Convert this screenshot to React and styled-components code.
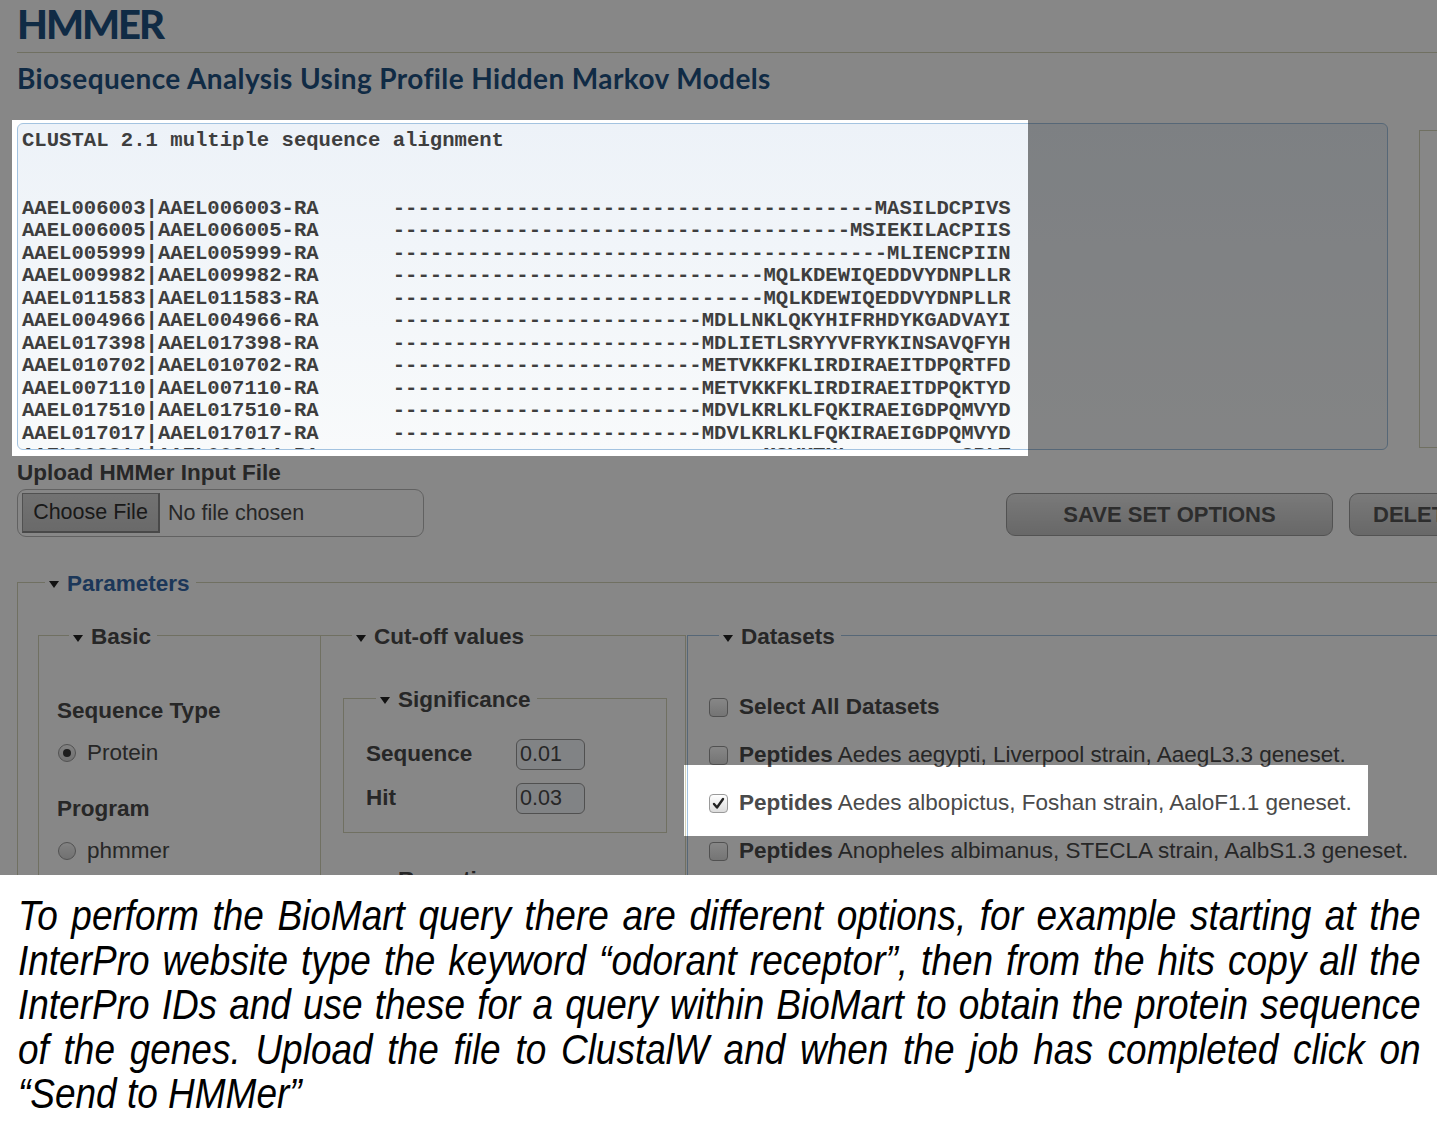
import React from 'react';
import styled, { createGlobalStyle } from 'styled-components';

const GlobalStyle = createGlobalStyle`
    html, body {
        margin: 0;
        padding: 0;
        background: #fff;
    }
    body {
        font-family: 'Liberation Sans', Arial, sans-serif;
    }
`;

const OLIVE = '#d3d3ba';
const SKY = '#a3c3e0';
const INK = '#4a4a4a';

const Page = styled.div`
    width: 100%;
    min-height: 1125px;
    background: #fff;
    overflow: hidden;
`;

const Screen = styled.div`
    position: relative;
    height: 875px;
    overflow: hidden;
    background: #fff;
    padding-left: 17px;
    box-sizing: border-box;
    color: ${INK};
`;

const Title = styled.h1`
    margin: 0;
    height: 52px;
    font-family: 'Lato', 'Liberation Sans', sans-serif;
    font-weight: 900;
    font-size: 40px;
    line-height: 48px;
    letter-spacing: -2px;
    color: #1f5282;
    border-bottom: 1px solid ${OLIVE};
`;

const Subtitle = styled.h2`
    margin: 9px 0 0;
    font-family: 'Lato', 'Liberation Sans', sans-serif;
    font-weight: 700;
    font-size: 28px;
    line-height: 32px;
    letter-spacing: 0.4px;
    color: #1f5282;
`;

const EditorRow = styled.div`
    display: flex;
    gap: 31px;
    margin-top: 29px;
    height: 327px;
`;

const CodeArea = styled.div`
    flex: 0 0 1371px;
    box-sizing: border-box;
    height: 327px;
    border: 1px solid ${SKY};
    border-radius: 6px;
    background: linear-gradient(#edf2f8, #f8fafb);
    overflow: hidden;
    padding: 6px 4px;
`;

const Code = styled.pre`
    margin: 0;
    font-family: 'Liberation Mono', 'Courier New', monospace;
    font-weight: 700;
    font-size: 20.6px;
    line-height: 22.5px;
    color: #3e3e3e;
`;

const SidePanel = styled.div`
    flex: 0 0 300px;
    margin-top: 7px;
    height: 316px;
    border: 1px solid ${OLIVE};
`;

const FieldLabel = styled.div`
    margin-top: 10px;
    font-size: 22.5px;
    line-height: 26px;
    font-weight: 700;
`;

const ActionRow = styled.div`
    display: flex;
    align-items: flex-start;
    margin-top: 3px;
`;

const FileBox = styled.div`
    flex: 0 0 407px;
    display: flex;
    align-items: center;
    gap: 8px;
    height: 48px;
    box-sizing: border-box;
    padding: 0 4px;
    border: 1px solid #b8b8b8;
    border-radius: 9px;
    font-size: 21.5px;
    white-space: nowrap;
`;

const FileButton = styled.span`
    display: flex;
    align-items: center;
    justify-content: center;
    width: 138px;
    height: 40px;
    box-sizing: border-box;
    background: linear-gradient(#d8d8d8, #c8c8c8);
    border: 1px solid #9a9a9a;
    border-right: 2px solid #8a8a8a;
    border-bottom: 2px solid #8a8a8a;
    color: #303030;
`;

const Buttons = styled.div`
    flex: 0 0 auto;
    display: flex;
    gap: 16px;
    margin: 4px 0 0 582px;
`;

const BigButton = styled.button`
    flex: 0 0 327px;
    height: 43px;
    border: 1px solid #9c9c9c;
    border-radius: 9px;
    background: linear-gradient(#e6e6e6, #c4c4c4);
    font-family: 'Liberation Sans', Arial, sans-serif;
    font-weight: 700;
    font-size: 22px;
    color: #555;
    white-space: nowrap;
    text-align: ${p => (p.$cut ? 'left' : 'center')};
    padding: ${p => (p.$cut ? '0 0 0 23px' : '0')};
`;

const Fieldset = styled.fieldset`
    margin: 0;
    padding: 0;
    min-width: 0;
    border: none;
    ${p => p.$top && `border-top: 1px solid ${p.$top};`}
    ${p => p.$left && `border-left: 1px solid ${p.$left};`}
    ${p => p.$right && `border-right: 1px solid ${p.$right};`}
    ${p => p.$bottom && `border-bottom: 1px solid ${p.$bottom};`}
`;

const ParamsSet = styled(Fieldset)`
    margin-top: 31px;
    width: 1500px;
    height: 400px;
`;

const Legend = styled.legend`
    margin-left: ${p => p.$offset}px;
    padding: 0 6px 0 4px;
    font-size: 22.5px;
    line-height: 26px;
    font-weight: 700;
    white-space: nowrap;
    color: ${p => p.$color || INK};
`;

const LegendInner = styled.span`
    display: inline-flex;
    align-items: center;
    gap: 8px;
`;

const Caret = styled.span`
    width: 0;
    height: 0;
    border-left: 5px solid transparent;
    border-right: 5px solid transparent;
    border-top: 7px solid #222;
    margin-top: 2px;
`;

const Columns = styled.div`
    display: grid;
    grid-template-columns: 283px 365px 1fr;
    margin: 25px 0 0 20px;
`;

const BasicSet = styled(Fieldset)`
    height: 400px;
    padding: 0 0 0 18px;
`;

const CutSet = styled(Fieldset)`
    height: 400px;
    padding: 0 0 0 22px;
`;

const DataSet = styled(Fieldset)`
    height: 400px;
    margin-left: 1px;
    padding: 0 0 0 21px;
`;

const Heading = styled.div`
    margin-top: ${p => p.$gap}px;
    font-size: 22.5px;
    line-height: 26px;
    font-weight: 700;
    white-space: nowrap;
`;

const OptionRow = styled.label`
    display: flex;
    align-items: center;
    gap: ${p => p.$gap || 11}px;
    margin-top: ${p => p.$mt}px;
    height: 26px;
    font-size: 22.5px;
    line-height: 26px;
    white-space: nowrap;
    color: ${INK};
    b {
        font-weight: 700;
    }
`;

const Radio = styled.span`
    position: relative;
    width: 18px;
    height: 18px;
    box-sizing: border-box;
    border-radius: 50%;
    border: 1px solid #9a9a9a;
    background: linear-gradient(#f6f6f6, #d6d6d6);
    margin-left: 1px;

    &::after {
        content: '';
        display: ${p => (p.$on ? 'block' : 'none')};
        position: absolute;
        left: 4px;
        top: 4px;
        width: 8px;
        height: 8px;
        border-radius: 50%;
        background: #3a3a3a;
    }
`;

const Box = styled.span`
    display: flex;
    align-items: center;
    justify-content: center;
    width: 19px;
    height: 19px;
    box-sizing: border-box;
    border-radius: 4px;
    border: 1px solid #9a9a9a;
    background: linear-gradient(#ffffff, #dcdcdc);
`;

const SigSet = styled(Fieldset)`
    margin: 34px 0 0 0;
    width: 324px;
    box-sizing: border-box;
    border: 1px solid ${OLIVE};
    padding: 0 0 18px 22px;
`;

const NextSet = styled(Fieldset)`
    margin-top: 32px;
    width: 324px;
    height: 120px;
    border: 1px solid ${OLIVE};
`;

const ValueRow = styled.div`
    display: grid;
    grid-template-columns: 150px 69px;
    align-items: center;
    margin-top: ${p => p.$mt}px;
    font-size: 22.5px;
    font-weight: 700;
`;

const ValueInput = styled.span`
    height: 31px;
    box-sizing: border-box;
    border: 1px solid #979797;
    border-radius: 6px;
    background: #f4f7fb;
    padding-left: 3px;
    font-size: 21.5px;
    line-height: 29px;
    font-weight: 400;
`;

const Overlay = styled.div`
    position: absolute;
    inset: 0;
    background: rgba(0, 0, 0, 0.47);
    clip-path: path(evenodd, 'M0 0H1437V875H0Z M12 120H1028V456H12Z M684 765H1368V836H684Z');
    pointer-events: none;
`;

const CaptionFrame = styled.div`
    height: 250px;
    overflow: hidden;
    padding: 18px 0 0 18px;
    box-sizing: border-box;
`;

/* the slide used a narrow italic face; squeeze the regular one to the same widths */
const Caption = styled.div`
    width: 1631px;
    transform: scaleX(0.86);
    transform-origin: left top;
    font-family: 'Liberation Sans', Arial, sans-serif;
    font-style: italic;
    font-size: 43px;
    line-height: 44.5px;
    color: #000;
`;

const CaptionLine = styled.span`
    display: block;
    white-space: nowrap;
    text-align: justify;
    text-align-last: ${p => (p.$last ? 'left' : 'justify')};
`;

const ROWS = [
    ['006003', 'MASILDCPIVS'],
    ['006005', 'MSIEKILACPIIS'],
    ['005999', 'MLIENCPIIN'],
    ['009982', 'MQLKDEWIQEDDVYDNPLLR'],
    ['011583', 'MQLKDEWIQEDDVYDNPLLR'],
    ['004966', 'MDLLNKLQKYHIFRHDYKGADVAYI'],
    ['017398', 'MDLIETLSRYYVFRYKINSAVQFYH'],
    ['010702', 'METVKKFKLIRDIRAEITDPQRTFD'],
    ['007110', 'METVKKFKLIRDIRAEITDPQKTYD'],
    ['017510', 'MDVLKRLKLFQKIRAEIGDPQMVYD'],
    ['017017', 'MDVLKRLKLFQKIRAEIGDPQMVYD'],
    ['008814', 'MSYKTNL---------SRLT'],
];

const alignment =
    'CLUSTAL 2.1 multiple sequence alignment\n\n\n' +
    ROWS.map(([id, seq]) => `AAEL${id}|AAEL${id}-RA      ${seq.padStart(50, '-')}`).join('\n');

const Check = () => (
    <svg width="13" height="13" viewBox="0 0 13 13">
        <path d="M2 7 L5 10.5 L11 2" fill="none" stroke="#222" strokeWidth="2.4" strokeLinecap="round" strokeLinejoin="round" />
    </svg>
);

const SectionLegend = ({ children, color, offset }) => (
    <Legend $color={color} $offset={offset}>
        <LegendInner>
            <Caret />
            {children}
        </LegendInner>
    </Legend>
);

const DATASETS = [
    ['Aedes aegypti, Liverpool strain, AaegL3.3 geneset.', false],
    ['Aedes albopictus, Foshan strain, AaloF1.1 geneset.', true],
    ['Anopheles albimanus, STECLA strain, AalbS1.3 geneset.', false],
];

const CAPTION = [
    'To perform the BioMart query there are different options, for example  starting at the',
    'InterPro website type the  keyword “odorant receptor”, then from the hits copy all the',
    'InterPro IDs and use these for a query within BioMart to obtain the protein sequence',
    'of the genes. Upload the file to ClustalW and when the job has completed  click on',
    '“Send to HMMer”',
];

const App = () => (
    <Page>
        <GlobalStyle />
        <Screen>
            <Title>HMMER</Title>
            <Subtitle>Biosequence Analysis Using Profile Hidden Markov Models</Subtitle>

            <EditorRow>
                <CodeArea>
                    <Code>{alignment}</Code>
                </CodeArea>
                <SidePanel />
            </EditorRow>

            <FieldLabel>Upload HMMer Input File</FieldLabel>
            <ActionRow>
                <FileBox>
                    <FileButton>Choose File</FileButton>
                    <span>No file chosen</span>
                </FileBox>
                <Buttons>
                    <BigButton>SAVE SET OPTIONS</BigButton>
                    <BigButton $cut>DELETE SET</BigButton>
                </Buttons>
            </ActionRow>

            <ParamsSet $top={OLIVE} $left={OLIVE}>
                <SectionLegend color="#3568a8" offset={27}>Parameters</SectionLegend>
                <Columns>
                    <BasicSet $top={OLIVE} $left={OLIVE} $right={OLIVE}>
                        <SectionLegend offset={12}>Basic</SectionLegend>
                        <Heading $gap={48}>Sequence Type</Heading>
                        <OptionRow $mt={16}>
                            <Radio $on />
                            Protein
                        </OptionRow>
                        <Heading $gap={30}>Program</Heading>
                        <OptionRow $mt={16}>
                            <Radio />
                            phmmer
                        </OptionRow>
                    </BasicSet>

                    <CutSet $top={OLIVE} $right={OLIVE}>
                        <SectionLegend offset={9}>Cut-off values</SectionLegend>
                        <SigSet>
                            <SectionLegend offset={10}>Significance</SectionLegend>
                            <ValueRow $mt={26}>
                                <span>Sequence</span>
                                <ValueInput>0.01</ValueInput>
                            </ValueRow>
                            <ValueRow $mt={13}>
                                <span>Hit</span>
                                <ValueInput>0.03</ValueInput>
                            </ValueRow>
                        </SigSet>
                        <NextSet>
                            <SectionLegend offset={32}>Reporting</SectionLegend>
                        </NextSet>
                    </CutSet>

                    <DataSet $top={SKY} $left={SKY}>
                        <SectionLegend offset={10}>Datasets</SectionLegend>
                        <OptionRow $mt={44}>
                            <Box />
                            <b>Select All Datasets</b>
                        </OptionRow>
                        {DATASETS.map(([name, on]) => (
                            <OptionRow key={name} $mt={22}>
                                <Box>{on && <Check />}</Box>
                                <span>
                                    <b>Peptides</b> {name}
                                </span>
                            </OptionRow>
                        ))}
                    </DataSet>
                </Columns>
            </ParamsSet>

            <Overlay />
        </Screen>

        <CaptionFrame>
            <Caption>
                {CAPTION.map((line, i) => (
                    <CaptionLine key={i} $last={i === CAPTION.length - 1}>
                        {line}
                    </CaptionLine>
                ))}
            </Caption>
        </CaptionFrame>
    </Page>
);

export default App;
